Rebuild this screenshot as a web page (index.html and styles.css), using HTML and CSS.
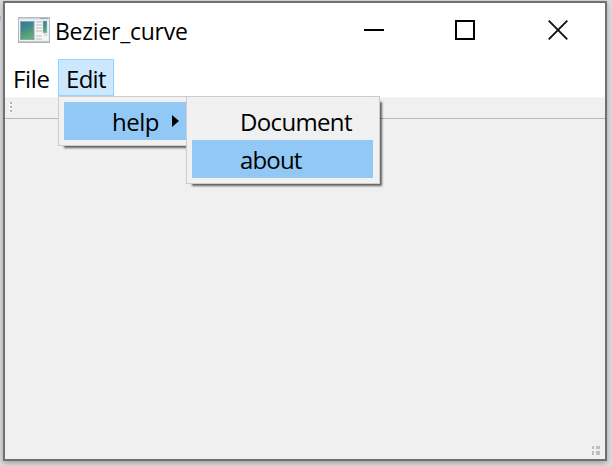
FILE: index.html
```html
<!DOCTYPE html>
<html lang="en">
<head>
<meta charset="utf-8">
<title>Bezier_curve</title>
<link rel="stylesheet" href="styles.css">
</head>
<body>
<span class="edge-mark"></span>
<main class="window">
  <header class="titlebar">
    <svg class="app-icon" width="32" height="26" viewBox="0 0 32 26">
      <defs>
        <linearGradient id="pane" x1="0" y1="0" x2=".35" y2="1"><stop offset="0" stop-color="#3a739b"/><stop offset=".5" stop-color="#438d8a"/><stop offset="1" stop-color="#5fae74"/></linearGradient>
        <linearGradient id="frame" x1="0" y1="0" x2="0" y2="1"><stop offset="0" stop-color="#b5bec8"/><stop offset="1" stop-color="#aeb2b7"/></linearGradient>
      </defs>
      <rect x=".5" y=".5" width="31" height="25" fill="#e9ebee" stroke="url(#frame)"/>
      <path d="M1 1.5H31" stroke="#cbd1d8"/><path d="M22 1.5H30" stroke="#9ca9b9"/>
      <rect x="1.5" y="3.5" width="15" height="20" fill="#f8f8f8"/>
      <rect x="2.5" y="4.5" width="13.500" height="18" fill="url(#pane)" stroke="#8ba6ac"/>
      <rect x="17" y="3.500" width="13.500" height="20" fill="#f6f6f6"/>
      <path d="M18 5H24M18 8H24M18 11H24M18 14H24M18 19H24M18 22H24M26 18H29" stroke="#d0d0d0" stroke-width="1.3"/>
      <rect x="25" y="4" width="4" height="12" fill="url(#pane)" stroke="#b5c8cc" stroke-width=".6"/>
      <path d="M1 24.500H31" stroke="#c8cbce"/>
    </svg>
    <h1 class="title">Bezier_curve</h1>
    <div class="controls">
      <svg width="20" height="20" viewBox="0 0 20 20"><path d="M0 10H20" stroke="#000" stroke-width="2"/></svg>
      <svg width="20" height="20" viewBox="0 0 20 20"><rect x="1" y="1" width="18" height="18" fill="none" stroke="#000" stroke-width="2"/></svg>
      <svg class="close" width="20" height="20" viewBox="0 0 20 20"><path d="M.7.7 19.300 19.300M19.300.7.7 19.300" stroke="#101014" stroke-width="1.900"/></svg>
    </div>
  </header>
  <nav class="menubar">
    <div class="menu-title file">File</div>
    <div class="menu-title active"><span class="edit">Edit</span>
      <div class="popup edit-menu">
        <div class="item selected"><span class="help">help</span>
          <svg class="arrow" width="7" height="12" viewBox="0 0 7 12"><path d="M0 0 7 6 0 12Z"/></svg>
        </div>
        <div class="popup help-menu">
          <div class="item"><span class="document">Document</span></div>
          <div class="item selected"><span class="about">about</span></div>
        </div>
      </div>
    </div>
  </nav>
  <div class="toolbar"><i></i><i></i><i></i></div>
  <section class="content"><div class="grip"><i></i><i></i><i></i><i></i></div></section>
</main>
</body>
</html>
```
FILE: styles.css
```css
* { box-sizing: border-box; }
body {
  margin: 0;
  width: 612px;
  height: 466px;
  padding: 1px 5px 5px 3px;
  overflow: hidden;
  background: #dedee1;
  font: 24px/36px "Open Sans", "Noto Sans", sans-serif;
  color: #000;
}
.edge-mark {
  position: absolute;
  left: -5px;
  top: 14px;
  width: 6px;
  height: 8px;
  border-radius: 50%;
  background: #aaa4ef;
}
.window {
  display: flex;
  flex-direction: column;
  width: 604px;
  height: 460px;
  border: 2px solid #707070;
  background: #fff;
  box-shadow: 0 2px 6px rgba(0, 0, 0, .3);
}
.titlebar { display: flex; height: 56px; flex: none; }
.app-icon { margin: 14px 0 0 13px; flex: none; }
.title {
  width: 140px;
  margin: 10px 0 0 5px;
  font-size: 23px;
  font-weight: 400;
  line-height: 36px;
  letter-spacing: -.25px;
  white-space: nowrap;
}
.controls { display: flex; gap: 71px; margin: 17px 0 0 169px; }
.close { margin-left: 2px; }
.menubar { display: flex; height: 37px; flex: none; }
.file { width: 53px; padding-left: 8px; padding-top: 2px; letter-spacing: -.3px; }
.active {
  position: relative;
  width: 56px;
  height: 37px;
  padding: 1px 0 0 7px;
  border: 1px solid #99d1ff;
  background: #cce8ff;
}
.edit { letter-spacing: -.7px; }
.popup {
  position: absolute;
  z-index: 1;
  padding: 5px;
  border: 1px solid #ccc;
  background: #f1f1f1;
  box-shadow: 4px 4px 2px -2px rgba(0, 0, 0, .6);
}
.edit-menu { left: -1px; top: 36px; width: 180px; height: 50px; }
.help-menu { left: 127px; top: -1px; width: 194px; height: 88px; padding-right: 6px; }
.item { display: flex; height: 38px; padding: 2px 0 0 48px; background: #f0f0f0; }
.selected { background: #91c8f6; }
.help { letter-spacing: -.5px; }
.document { letter-spacing: -.65px; }
.about { letter-spacing: -.85px; }
.arrow { position: absolute; left: 113px; top: 18px; }
.toolbar {
  display: flex;
  flex-direction: column;
  gap: 2px;
  height: 22px;
  flex: none;
  margin-top: 1px;
  padding: 4px 0 0 5px;
  border-top: 1px solid #f6f6f6;
  border-bottom: 1px solid #b8b8b8;
  background: #f0f0f0;
}
.toolbar i { width: 2px; height: 2px; background: #b5b5b5; box-shadow: -1px 1px #fff; }
.content {
  display: flex;
  flex: 1;
  justify-content: flex-end;
  align-items: flex-end;
  padding: 0 5px 4px 0;
  background: #f0f0f0;
}
.grip { display: grid; grid-template-columns: 2px 4px; grid-template-rows: 3px 4px; gap: 2px; }
.grip i { background: #bfbfbf; }
```
